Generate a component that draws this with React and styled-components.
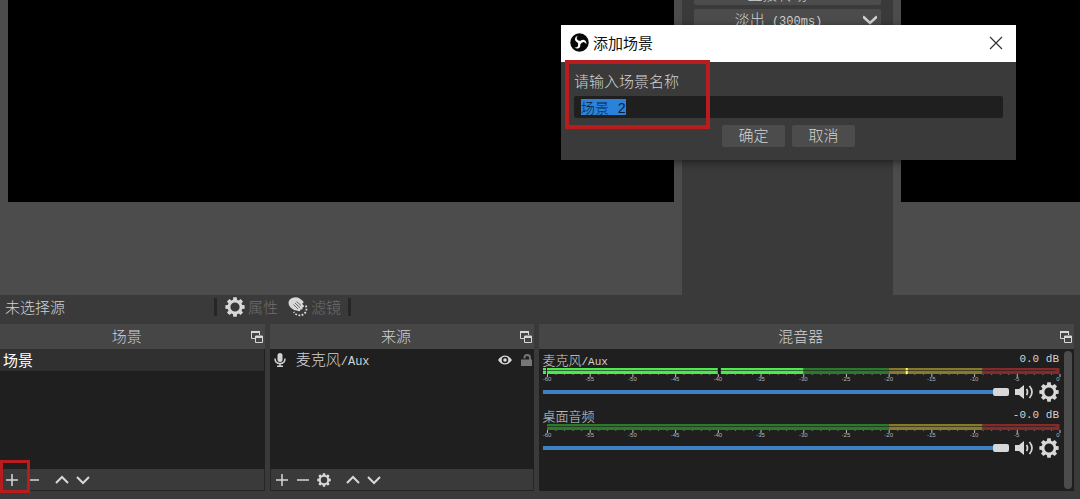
import React, { useEffect, useRef } from "react";
import styled, { createGlobalStyle } from "styled-components";

const GlobalStyle = createGlobalStyle`
  *, *::before, *::after { box-sizing: border-box; }
  body {
    margin: 0;
    background: #3a3a3a;
    color: #d2d2d2;
    font: 15px/20px "Noto Sans CJK SC", "Noto Sans", sans-serif;
    font-weight: 300;
  }
  button, input { font: inherit; color: inherit; }
`;

const Window = styled.div`
  position: relative;
  display: flex;
  flex-direction: column;
  min-height: 100vh;
  overflow: hidden;
`;

const Latin = styled.span`
  font-family: "Liberation Mono", monospace;
  font-size: ${(p) => (p.$small ? 11 : 12)}px;
`;

/* ---------- Preview / program ---------- */

const Stage = styled.section`
  display: flex;
  gap: 8px;
  height: 295px;
  padding-left: 8px;
  background: #4c4c4c;
`;

const Canvas = styled.div`
  flex: ${(p) => p.$grow} 1 0;
  height: 202px;
  background: #000;
`;

const TransitionPanel = styled.div`
  flex: none;
  display: flex;
  flex-direction: column;
  gap: 4px;
  width: 211px;
  padding: 0 12px;
  background: #3a3a3a;
  overflow: hidden;
`;

const TransitionButton = styled.button`
  flex: none;
  display: flex;
  align-items: center;
  height: 22px;
  margin-top: ${(p) => (p.$clipped ? -17 : 0)}px;
  padding: 0 ${(p) => (p.$clipped ? 20 : 4)}px 0 0;
  border: 0;
  border-radius: 2px;
  background: #4c4c4c;
  line-height: 22px;
  span:first-child { flex: 1; }
`;

/* ---------- Context bar ---------- */

const ContextBar = styled.div`
  display: flex;
  align-items: center;
  height: 29px;
  padding: 0 5px 5px;
`;

const ContextLabel = styled.span`
  width: 209px;
`;

const Divider = styled.span`
  width: 3px;
  height: 18px;
  background: #262626;
`;

const ContextButton = styled.button`
  display: flex;
  align-items: center;
  gap: 3px;
  margin: 0 2px 0 8px;
  padding: 0;
  border: 0;
  background: none;
  color: #6e6e6e;
  svg { color: #d8d8d8; }
  & + & { margin: 0 7px 0 8px; }
`;

/* ---------- Docks ---------- */

const Docks = styled.main`
  flex: 1;
  display: flex;
  gap: 5px;
  padding: 0 6px 8px 0;
`;

const Dock = styled.section`
  flex: ${(p) => p.$grow} 1 0;
  display: flex;
  flex-direction: column;
  min-width: 0;
`;

const DockHeader = styled.header`
  display: flex;
  align-items: center;
  height: 25px;
  padding: 0 1px 0 4px;
  background: #464646;
`;

const DockTitle = styled.h2`
  flex: 1;
  margin: 0;
  padding-bottom: 2px;
  font-size: 15px;
  font-weight: 300;
  line-height: 22px;
  text-align: center;
`;

const IconButton = styled.button`
  flex: none;
  display: flex;
  align-items: center;
  justify-content: center;
  width: ${(p) => p.$w || 14}px;
  height: 20px;
  padding: 0;
  border: 0;
  background: none;
  color: #d8d8d8;
`;

const DockBody = styled.div`
  flex: 1;
  display: flex;
  flex-direction: column;
  min-height: 120px;
  background: #1f1f1f;
`;

const SceneItem = styled.div`
  height: 22px;
  margin-right: 1px;
  padding-left: 3px;
  background: #303030;
  color: #fff;
  font-weight: 400;
  line-height: 22px;
`;

const SourceItem = styled.div`
  display: flex;
  align-items: center;
  gap: 8px;
  height: 22px;
  padding: 0 0 0 4px;
`;

const SourceName = styled.span`
  flex: 1;
  padding-left: 2px;
`;

const DockToolbar = styled.div`
  display: flex;
  align-items: center;
  gap: 7px;
  height: 22px;
  padding-left: 4px;
  border: 1px solid #262626;
  border-top: 0;
  background: #3a3a3a;
`;

const ToolSpacer = styled.span`
  width: 1px;
`;

/* ---------- Mixer ---------- */

const MixerBody = styled.div`
  flex: 1;
  display: flex;
  gap: 5px;
  padding: 2px 2px 2px 4px;
  background: #1f1f1f;
`;

const Channels = styled.div`
  flex: 1;
  min-width: 0;
`;

const Channel = styled.div`
  display: flex;
  flex-direction: column;
  height: 56px;
`;

const ChannelTop = styled.div`
  display: flex;
  justify-content: space-between;
  height: 17px;
  font-size: 13px;
  line-height: 17px;
`;

const MeterWrap = styled.div`
  height: 14px;
  padding-left: 4px;
  svg { display: block; width: 100%; height: 14px; overflow: visible; }
`;

const ChannelControls = styled.div`
  display: flex;
  align-items: center;
  gap: 5px;
  height: 20px;
`;

const Volume = styled.input`
  flex: 1;
  min-width: 0;
  height: 10px;
  margin: 0;
  appearance: none;
  background: linear-gradient(#3f80c4, #3f80c4) center / 100% 4px no-repeat;
  &::-webkit-slider-thumb {
    appearance: none;
    width: 16px;
    height: 8px;
    border-radius: 2px;
    background: #d8d8d8;
  }
`;

const ScrollThumb = styled.div`
  width: 8px;
  border-radius: 4px;
  background: #4c4c4c;
`;

/* ---------- Dialog ---------- */

const Dialog = styled.form`
  position: absolute;
  top: 25px;
  left: 561px;
  width: 455px;
  background: #3a3a3a;
  box-shadow: 0 2px 8px rgba(0, 0, 0, 0.5);
`;

const DialogTitleBar = styled.div`
  display: flex;
  align-items: center;
  gap: 4px;
  height: 37px;
  padding: 0 13px 2px 9px;
  background: #fff;
  color: #111;
  font-weight: 400;
  h1 { flex: 1; margin: 0; font: inherit; }
  button { color: #333; }
`;

const DialogBody = styled.div`
  padding: 9px 13px 13px;
  label { display: block; height: 25px; }
`;

const NameInput = styled.input`
  display: block;
  width: 100%;
  height: 22px;
  padding: 0;
  border: solid #1f1f1f;
  border-width: 3px 7px;
  border-radius: 2px;
  outline: 0;
  background: #1f1f1f;
  font-family: "Liberation Mono", "Noto Sans CJK SC", monospace;
  font-size: 14px;
  line-height: 16px;
  &::selection { background: #2a82da; color: #0b1f38; }
`;

const DialogActions = styled.div`
  display: flex;
  justify-content: center;
  gap: 7px;
  margin-top: 7px;
`;

const DialogButton = styled.button`
  width: 63px;
  height: 22px;
  padding: 0 0 2px;
  border: 0;
  border-radius: 2px;
  background: #4c4c4c;
  line-height: 20px;
`;

const Marker = styled.div`
  position: absolute;
  top: ${(p) => p.$top}px;
  left: ${(p) => p.$left}px;
  width: ${(p) => p.$w}px;
  height: ${(p) => p.$h}px;
  border: ${(p) => p.$b}px solid #b91c1c;
  pointer-events: none;
`;

/* ---------- Icons ---------- */

const gearPath = (() => {
  const pts = [];
  for (let i = 0; i < 8; i++) {
    [[-0.27, 7.5], [-0.18, 9.8], [0.18, 9.8], [0.27, 7.5]].forEach(([d, r]) => {
      const a = (i * Math.PI) / 4 + d;
      pts.push(`${(10 + r * Math.sin(a)).toFixed(2)} ${(10 - r * Math.cos(a)).toFixed(2)}`);
    });
  }
  return `M${pts.join("L")}ZM10 5.4a4.6 4.6 0 1 0 0 9.2a4.6 4.6 0 1 0 0-9.2Z`;
})();

const Gear = ({ size }) => (
  <svg width={size} height={size} viewBox="0 0 20 20">
    <path d={gearPath} fill="currentColor" fillRule="evenodd" />
  </svg>
);

const Stroke = ({ d, sw = 2 }) => (
  <svg width="14" height="14" viewBox="0 0 14 14" fill="none" stroke="currentColor" strokeWidth={sw}>
    <path d={d} />
  </svg>
);

const Plus = () => <Stroke d="M7 1V13M1 7H13" sw={1.5} />;
const Minus = () => <Stroke d="M1 7H13" sw={1.5} />;
const Up = () => <Stroke d="M1 10L7 4L13 10" />;
const Down = () => <Stroke d="M1 4L7 10L13 4" />;
const DropArrow = () => <Stroke d="M0 3.500L7 10L14 3.500" sw={2.5} />;

const Popout = () => (
  <svg width="12" height="12" viewBox="0 0 12 12" fill="none" stroke="currentColor">
    <path d="M4 7.500H.5V.5H8.500V4" />
    <path d="M0 1H9" strokeWidth="2" />
    <path d="M4.500 5V11.500H11.500V5Z" />
    <path d="M4 6H12" strokeWidth="2" />
  </svg>
);

const Hand = () => (
  <svg width="20" height="20" viewBox="0 0 20 20">
    <path
      d="M.5 6Q.5 2.500 4 1Q8-.5 11 1L15 4Q16 5.500 15 6.300L14 6.500L16 9Q16 10.500 14.500 10.200L14.500 12Q13.500 13 12.500 12.200L12 14Q10.500 14.500 9.500 13.800Q5.500 13.500 2.500 10.500Q.5 8.500 .5 6Z"
      fill="currentColor"
    />
    <path d="M8.500 4.500L13 8.500M7 6L12 10.800M5.500 7.500L10 12" stroke="#3a3a3a" strokeWidth=".7" />
    <path
      d="M17.800 8.500Q19.500 12.500 17 16Q13.500 19.500 9 17.800Q7 17 5.800 15"
      fill="none" stroke="currentColor" strokeWidth="1.800" strokeDasharray="1.800 1.500"
    />
  </svg>
);

const Mic = () => (
  <svg width="12" height="14" viewBox="0 0 12 14">
    <rect x="3.500" y="0" width="5" height="9" rx="2.500" fill="currentColor" />
    <path d="M1 5.500Q1 10.500 6 10.500Q11 10.500 11 5.500M6 10.500V13M3 13.200H9" fill="none" stroke="currentColor" strokeWidth="1.500" />
  </svg>
);

const Eye = () => (
  <svg width="14" height="10" viewBox="0 0 14 10">
    <path d="M0 5Q3 .5 7 .5Q11 .5 14 5Q11 9.500 7 9.500Q3 9.500 0 5Z" fill="currentColor" />
    <circle cx="7" cy="5" r="3.300" fill="#1f1f1f" />
    <circle cx="7" cy="5" r="1.800" fill="currentColor" />
  </svg>
);

const Lock = () => (
  <svg width="11" height="12" viewBox="0 0 11 12">
    <rect x="0" y="5.500" width="11" height="6.500" fill="#777" />
    <path d="M3.500 4.500V3.500Q3.500 1 6 1Q9 1 9 3.500V6" fill="none" stroke="#777" strokeWidth="1.800" />
  </svg>
);

const Speaker = () => (
  <svg width="19" height="14" viewBox="0 0 19 14">
    <path d="M0 4H4L9 0V14L4 10H0Z" fill="currentColor" />
    <path d="M11.500 4Q13.500 7 11.500 10M14.500 1Q19.500 7 14.500 13" fill="none" stroke="currentColor" strokeWidth="1.700" />
  </svg>
);

const ObsLogo = () => (
  <svg width="19" height="19" viewBox="0 0 20 20">
    <circle cx="10" cy="10" r="9.700" fill="#080808" />
    {[0, 120, 240].map((a) => (
      <path
        key={a}
        transform={`rotate(${a} 10 10)`}
        d="M10 10.500Q5 9.500 5.200 6Q5.500 3.800 8 2.800Q6.500 5 7.300 6.600Q8.400 8.300 11.200 8.300Z"
        fill="#fff"
      />
    ))}
  </svg>
);

/* ---------- Pieces ---------- */

const pct = (db) => `${((db + 60) / 60) * 100}%`;
const span = (n) => `${(n / 60) * 100}%`;

function Meter({ level, hold, peak }) {
  return (
    <MeterWrap>
      <svg>
        <rect x={pct(-60)} width={span(40)} height="6" fill="#2b7a2b" />
        <rect x={pct(-20)} width={span(11)} height="6" fill="#85792b" />
        <rect x={pct(-9)} width={span(9)} height="6" fill="#842a2a" />
        {level !== undefined && (
          <>
            <rect x="-4" width="3" height="6" fill="#4fe84f" />
            <rect x={pct(-60)} width={span(level + 60)} height="6" fill="#4fe84f" />
            <rect x={pct(hold)} width="3" height="6" fill="#111" />
            <rect x={pct(peak)} width="2" height="6" fill="#ffff66" />
          </>
        )}
        <rect x="-4" y="2" width="100%" height="1" fill="#1f1f1f" opacity=".65" />
        {Array.from({ length: 61 }, (_, i) => (
          <rect key={i} x={pct(i - 60)} y="6" width="1" height={i % 5 ? 1 : 3} fill={i % 5 ? "#777" : "#bbb"} />
        ))}
        {Array.from({ length: 13 }, (_, i) => (
          <text
            key={i} x={pct(i * 5 - 60)} y="13" textAnchor={i === 12 ? "end" : "middle"} fill="#b4b4b4"
            fontFamily="Liberation Sans, sans-serif" fontSize="6"
          >
            {i * 5 - 60}
          </text>
        ))}
      </svg>
    </MeterWrap>
  );
}

function MixerChannel({ name, latin, db, ...meter }) {
  return (
    <Channel>
      <ChannelTop>
        <span>{name}{latin && <Latin $small>{latin}</Latin>}</span>
        <Latin $small>{db}</Latin>
      </ChannelTop>
      <Meter {...meter} />
      <ChannelControls>
        <Volume type="range" min="0" max="100" defaultValue="100" aria-label={`${name} 音量`} />
        <IconButton $w={20} aria-label="静音"><Speaker /></IconButton>
        <IconButton $w={20} aria-label="设置"><Gear size={20} /></IconButton>
      </ChannelControls>
    </Channel>
  );
}

function Header({ children }) {
  return (
    <DockHeader>
      <DockTitle>{children}</DockTitle>
      <IconButton aria-label="浮动"><Popout /></IconButton>
    </DockHeader>
  );
}

function AddSceneDialog() {
  const input = useRef(null);
  useEffect(() => {
    input.current.focus();
    input.current.select();
  }, []);
  return (
    <Dialog onSubmit={(e) => e.preventDefault()}>
      <DialogTitleBar>
        <ObsLogo />
        <h1>添加场景</h1>
        <IconButton type="button" aria-label="关闭">
          <Stroke d="M1 1L13 13M13 1L1 13" sw={1.2} />
        </IconButton>
      </DialogTitleBar>
      <DialogBody>
        <label htmlFor="scene-name">请输入场景名称</label>
        <NameInput id="scene-name" ref={input} defaultValue="场景 2" />
        <DialogActions>
          <DialogButton type="submit">确定</DialogButton>
          <DialogButton type="button">取消</DialogButton>
        </DialogActions>
      </DialogBody>
    </Dialog>
  );
}

export default function App() {
  return (
    <Window>
      <GlobalStyle />
      <Stage>
        <Canvas $grow={666} />
        <TransitionPanel>
          <TransitionButton $clipped><span>直接转场</span></TransitionButton>
          <TransitionButton>
            <span>淡出<Latin> (300ms)</Latin></span>
            <DropArrow />
          </TransitionButton>
        </TransitionPanel>
        <Canvas $grow={179} />
      </Stage>

      <ContextBar>
        <ContextLabel>未选择源</ContextLabel>
        <Divider />
        <ContextButton disabled><Gear size={20} />属性</ContextButton>
        <ContextButton disabled><Hand />滤镜</ContextButton>
        <Divider />
      </ContextBar>

      <Docks>
        <Dock $grow={265}>
          <Header>场景</Header>
          <DockBody><SceneItem>场景</SceneItem></DockBody>
          <DockToolbar>
            <IconButton aria-label="添加场景"><Plus /></IconButton>
            <IconButton aria-label="移除场景"><Minus /></IconButton>
            <ToolSpacer />
            <IconButton aria-label="上移"><Up /></IconButton>
            <IconButton aria-label="下移"><Down /></IconButton>
          </DockToolbar>
        </Dock>
        <Dock $grow={264}>
          <Header>来源</Header>
          <DockBody>
            <SourceItem>
              <Mic />
              <SourceName>麦克风<Latin>/Aux</Latin></SourceName>
              <IconButton aria-label="显示"><Eye /></IconButton>
              <IconButton aria-label="锁定"><Lock /></IconButton>
            </SourceItem>
          </DockBody>
          <DockToolbar>
            <IconButton aria-label="添加来源"><Plus /></IconButton>
            <IconButton aria-label="移除来源"><Minus /></IconButton>
            <IconButton aria-label="来源属性"><Gear size={14} /></IconButton>
            <ToolSpacer />
            <IconButton aria-label="上移"><Up /></IconButton>
            <IconButton aria-label="下移"><Down /></IconButton>
          </DockToolbar>
        </Dock>
        <Dock $grow={536}>
          <Header>混音器</Header>
          <MixerBody>
            <Channels>
              <MixerChannel name="麦克风" latin="/Aux" db="0.0 dB" level={-30} hold={-40} peak={-18} />
              <MixerChannel name="桌面音频" db="-0.0 dB" />
            </Channels>
            <ScrollThumb />
          </MixerBody>
        </Dock>
      </Docks>

      <AddSceneDialog />
      <Marker $top={60} $left={565} $w={145} $h={69} $b={4} />
      <Marker $top={460} $left={0} $w={30} $h={33} $b={3} />
    </Window>
  );
}
